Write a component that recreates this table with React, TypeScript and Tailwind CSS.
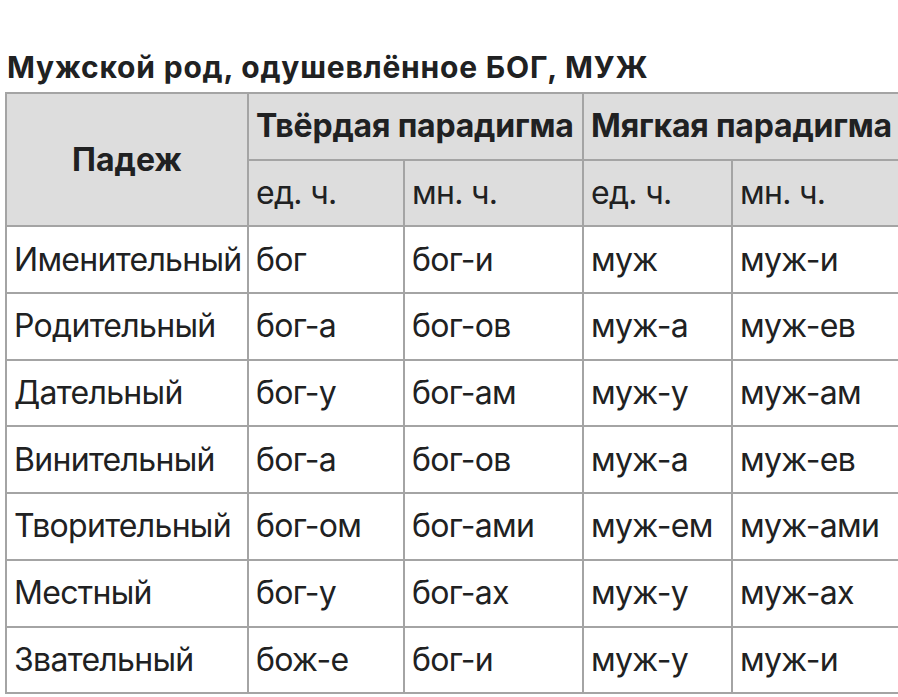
import React from "react";

const rows: string[][] = [
  ["Именительный", "бог", "бог-и", "муж", "муж-и"],
  ["Родительный", "бог-а", "бог-ов", "муж-а", "муж-ев"],
  ["Дательный", "бог-у", "бог-ам", "муж-у", "муж-ам"],
  ["Винительный", "бог-а", "бог-ов", "муж-а", "муж-ев"],
  ["Творительный", "бог-ом", "бог-ами", "муж-ем", "муж-ами"],
  ["Местный", "бог-у", "бог-ах", "муж-у", "муж-ах"],
  ["Звательный", "бож-е", "бог-и", "муж-у", "муж-и"],
];

export default function App() {
  const cell = "border-2 border-[#a4a4a4] px-[7px] py-0 h-[66.7px] text-left align-middle font-normal whitespace-nowrap tracking-[-0.7px]";
  const head = "border-2 border-[#a4a4a4] px-[7px] py-0 h-[66.7px] bg-[#dddddd] align-middle whitespace-nowrap";
  return (
    <div
      className="w-[898px] h-[697px] overflow-hidden bg-white text-[#202122]"
      style={{ fontFamily: "Inter, Roboto, 'Noto Sans', sans-serif" }}
    >
      <h2 className="pt-[47px] pl-[7px] text-[30px] font-bold leading-[40px] tracking-[0.8px]">
        Мужской род, одушевлённое БОГ, МУЖ
      </h2>
      <table className="ml-[5px] mt-[5px] border-collapse table-fixed w-[1080px] text-[32px] leading-[38px]">
        <colgroup>
          <col className="w-[242px]" />
          <col className="w-[156px]" />
          <col className="w-[179px]" />
          <col className="w-[149px]" />
          <col className="w-[354px]" />
        </colgroup>
        <thead>
          <tr>
            <th rowSpan={2} className={head + " text-center font-bold"}>Падеж</th>
            <th colSpan={2} className={head + " text-left font-bold tracking-[-0.2px]"}>Твёрдая парадигма</th>
            <th colSpan={2} className={head + " text-left font-bold tracking-[-0.2px]"}>Мягкая парадигма</th>
          </tr>
          <tr>
            <th className={head + " text-left font-normal tracking-[-0.7px]"}>ед. ч.</th>
            <th className={head + " text-left font-normal tracking-[-0.7px]"}>мн. ч.</th>
            <th className={head + " text-left font-normal tracking-[-0.7px]"}>ед. ч.</th>
            <th className={head + " text-left font-normal tracking-[-0.7px]"}>мн. ч.</th>
          </tr>
        </thead>
        <tbody>
          {rows.map((r, i) => (
            <tr key={i}>
              {r.map((c, j) => (
                <td key={j} className={cell}>{c}</td>
              ))}
            </tr>
          ))}
        </tbody>
      </table>
    </div>
  );
}
